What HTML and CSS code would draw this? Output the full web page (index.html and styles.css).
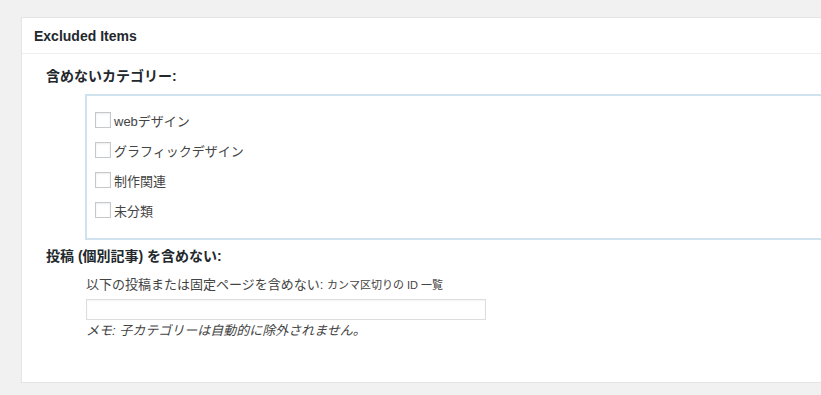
FILE: index.html
```html
<!DOCTYPE html>
<html lang="ja">
<head>
    <meta charset="UTF-8">
    <meta name="viewport" content="width=device-width, initial-scale=1.0">
    <title>Excluded Items</title>
    <link rel="stylesheet" href="styles.css">
</head>

<body>
    <div class="wrap">
        <div class="postbox">
            <h2 class="hndle">Excluded Items</h2>
            <div class="inside">
                <h3 class="field-title">含めないカテゴリー:</h3>
                <div class="cat-box">
                    <label class="cat-row"><span class="check"></span>webデザイン</label>
                    <label class="cat-row"><span class="check"></span>グラフィックデザイン</label>
                    <label class="cat-row"><span class="check"></span>制作関連</label>
                    <label class="cat-row"><span class="check"></span>未分類</label>
                </div>

                <h3 class="field-title posts-title">投稿 (個別記事) を含めない:</h3>
                <div class="field">
                    <label for="exclude" class="field-label">以下の投稿または固定ページを含めない: <small>カンマ区切りの ID 一覧</small></label>
                    <input type="text" id="exclude" class="text-input">
                    <p class="note">メモ: 子カテゴリーは自動的に除外されません。</p>
                </div>
            </div>
        </div>
    </div>
</body>
</html>
```

FILE: styles.css
```css
html, body {
    margin: 0;
    padding: 0;
    overflow: hidden;
}
body {
    background-color: #f1f1f1;
    font-family: "Liberation Sans", "Noto Sans CJK JP", sans-serif;
    color: #444;
    font-size: 13px;
}
.wrap {
    padding: 17px 0 0 21px;
}
.postbox {
    background-color: #fff;
    border: 1px solid #e5e5e5;
    box-shadow: 0 1px 1px rgba(0, 0, 0, 0.04);
    margin-right: -20px;
}
.hndle {
    margin: 0;
    height: 35px;
    line-height: 36px;
    padding-left: 12px;
    font-size: 14px;
    font-weight: bold;
    color: #23282d;
    border-bottom: 1px solid #eee;
}
.inside {
    padding: 0 0 41px 24px;
}
.field-title {
    margin: 12px 0 0;
    font-size: 14px;
    line-height: 20px;
    font-weight: bold;
    color: #23282d;
}
.posts-title {
    margin-top: 6px;
}
.cat-box {
    margin: 8px 0 0 39px;
    border: 2px solid #cfe2ed;
    border-right: none;
    padding: 9px 0 13px 8px;
}
.cat-row {
    display: flex;
    align-items: center;
    height: 30px;
    color: #444;
    font-size: 13px;
}
.check {
    display: inline-block;
    width: 14px;
    height: 14px;
    border: 1px solid #c6c9cc;
    box-shadow: inset 0 1px 2px rgba(0, 0, 0, 0.08);
    margin-right: 3px;
    background-color: #fff;
}
.field {
    margin-left: 40px;
}
.field-label {
    display: block;
    margin-top: 9px;
    line-height: 20px;
    font-size: 13px;
}
.field-label small {
    font-size: 11px;
}
.text-input {
    display: block;
    width: 400px;
    height: 21px;
    margin-top: 4px;
    padding: 0 4px;
    border: 1px solid #ddd;
    box-sizing: border-box;
    box-shadow: inset 0 1px 2px rgba(0, 0, 0, 0.05);
}
.note {
    margin: 1px 0 0;
    line-height: 20px;
    font-style: italic;
    font-size: 13px;
}
```
